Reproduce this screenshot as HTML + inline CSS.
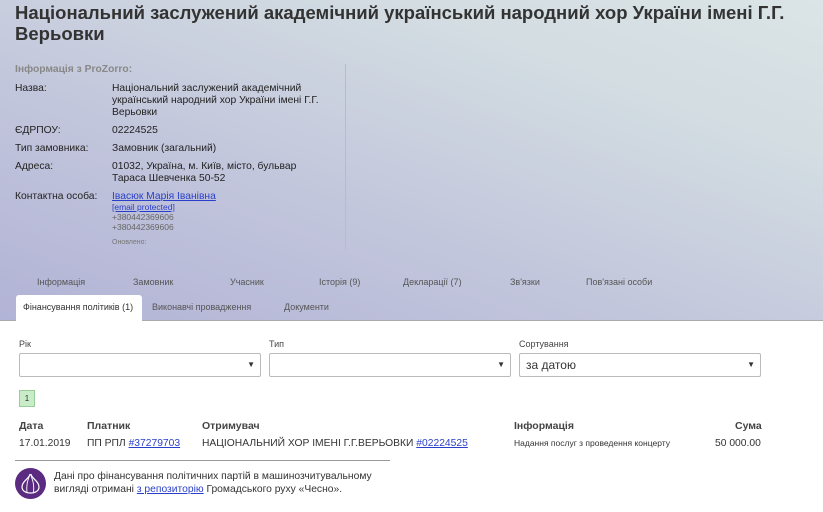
<!DOCTYPE html>
<html><head><meta charset="utf-8"><style>
*{box-sizing:border-box}
body{margin:0;width:823px;height:512px;overflow:hidden;font-family:"Liberation Sans",Arial,sans-serif;color:#333;background:#fff;position:relative}
.hdr{position:absolute;left:0;top:0;width:823px;height:321px;background:linear-gradient(20deg,#b2b3d6 0%,#c3c7dc 40%,#d3dde2 75%,#dbe4e6 100%);border-bottom:1px solid #aaa}
h1{position:absolute;left:15px;top:2px;margin:0;font-size:18.5px;line-height:21px;font-weight:bold;color:#333;width:800px}
.a{position:absolute;font-size:10.3px;color:#222;line-height:12px}
.lbl{left:15px}
.val{left:112px;width:222px}
a{color:#2a3fc9;text-decoration:underline}
.vline{position:absolute;left:345px;top:64px;width:1px;height:186px;background:#b8bcc8}
.tab{position:absolute;font-size:9px;color:#555}
.act{position:absolute;left:16px;top:295px;width:126px;height:27px;background:#fff;border-radius:3px 3px 0 0;font-size:9px;color:#333;padding:7px 0 0 7px}
.sl{position:absolute;top:353px;height:24px;border:1px solid #bbb;border-radius:2px;background:#fff;font-size:12px;padding:4px 6px;color:#333}
.sl:after{content:"▼";position:absolute;right:5px;top:6px;font-size:8px;color:#333}
.fl{position:absolute;top:339px;font-size:9px;color:#444}
.t{position:absolute;font-size:10.3px;color:#333}
.th{font-weight:bold;font-size:10.5px;color:#444}
</style></head><body>
<div class="hdr"></div>
<h1>Національний заслужений академічний український народний хор України імені Г.Г. Верьовки</h1>
<div class="a" style="left:15px;top:64px;color:#888;font-weight:bold">Інформація з ProZorro:</div>
<div class="a lbl" style="top:83px">Назва:</div>
<div class="a val" style="top:83px">Національний заслужений академічний український народний хор України імені Г.Г. Верьовки</div>
<div class="a lbl" style="top:125px">ЄДРПОУ:</div>
<div class="a val" style="top:125px">02224525</div>
<div class="a lbl" style="top:143px">Тип замовника:</div>
<div class="a val" style="top:143px">Замовник (загальний)</div>
<div class="a lbl" style="top:161px">Адреса:</div>
<div class="a val" style="top:161px;width:200px">01032, Україна, м. Київ, місто, бульвар Тараса Шевченка 50-52</div>
<div class="a lbl" style="top:191px">Контактна особа:</div>
<div class="a val" style="top:191px"><a>Івасюк Марія Іванівна</a></div>
<div class="a val" style="top:202px;font-size:8.5px;line-height:10px"><a>[email protected]</a><br><span style="color:#666">+380442369606<br>+380442369606</span></div>
<div class="a val" style="top:237px;font-size:7px;color:#777">Оновлено:</div>
<div class="vline"></div>
<div class="tab" style="left:37px;top:277px">Інформація</div>
<div class="tab" style="left:133px;top:277px">Замовник</div>
<div class="tab" style="left:230px;top:277px">Учасник</div>
<div class="tab" style="left:319px;top:277px">Історія (9)</div>
<div class="tab" style="left:403px;top:277px">Декларації (7)</div>
<div class="tab" style="left:510px;top:277px">Зв'язки</div>
<div class="tab" style="left:586px;top:277px">Пов'язані особи</div>
<div class="act">Фінансування політиків (1)</div>
<div class="tab" style="left:152px;top:302px">Виконавчі провадження</div>
<div class="tab" style="left:284px;top:302px">Документи</div>
<div class="fl" style="left:19px">Рік</div>
<div class="fl" style="left:269px">Тип</div>
<div class="fl" style="left:519px">Сортування</div>
<div class="sl" style="left:19px;width:242px"></div>
<div class="sl" style="left:269px;width:242px"></div>
<div class="sl" style="left:519px;width:242px">за датою</div>
<div style="position:absolute;left:19px;top:390px;width:16px;height:17px;background:#c8ecc8;border:1px solid #9c9;font-size:8px;text-align:center;line-height:15px;color:#333">1</div>
<div class="t th" style="left:19px;top:420px">Дата</div>
<div class="t th" style="left:87px;top:420px">Платник</div>
<div class="t th" style="left:202px;top:420px">Отримувач</div>
<div class="t th" style="left:514px;top:420px">Інформація</div>
<div class="t th" style="left:735px;top:420px">Сума</div>
<div class="t" style="left:19px;top:438px">17.01.2019</div>
<div class="t" style="left:87px;top:438px">ПП РПЛ <a>#37279703</a></div>
<div class="t" style="left:202px;top:438px">НАЦІОНАЛЬНИЙ ХОР ІМЕНІ Г.Г.ВЕРЬОВКИ <a>#02224525</a></div>
<div class="t" style="left:514px;top:438px;font-size:8.5px">Надання послуг з проведення концерту</div>
<div class="t" style="left:715px;top:438px">50 000.00</div>
<div style="position:absolute;left:15px;top:460px;width:375px;height:1px;background:#999"></div>
<svg style="position:absolute;left:15px;top:468px" width="31" height="31" viewBox="0 0 31 31"><circle cx="15.5" cy="15.5" r="15.5" fill="#5b2b82"/><path d="M15 6c0 4-8 7-8 13 0 4 4 6 8.5 6s8.5-2 8.5-6c0-6-8-9-8-13" fill="none" stroke="#fff" stroke-width="1.2"/><path d="M15 6c-2 6-4 10-3 19M15.5 6c2 6 4 10 3 19" fill="none" stroke="#fff" stroke-width="0.9"/></svg>
<div class="t" style="left:54px;top:470px;line-height:13px;font-size:10.3px">Дані про фінансування політичних партій в машинозчитувальному<br>вигляді отримані <a>з репозиторію</a> Громадського руху «Чесно».</div>
</body></html>
